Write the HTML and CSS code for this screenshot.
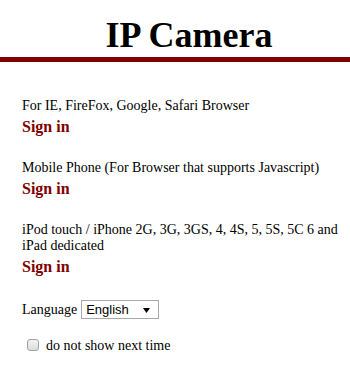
FILE: index.html
```html
<!DOCTYPE html>
<html>
<head>
<meta charset="utf-8">
<title>IP Camera</title>
<link rel="stylesheet" href="styles.css">
</head>
<body>
<header class="top">
  <h1 class="title">IP Camera</h1>
</header>
<main class="content">
  <section class="block">
    <div class="desc">For IE, FireFox, Google, Safari Browser</div>
    <a class="signin" href="#">Sign in</a>
  </section>
  <section class="block">
    <div class="desc">Mobile Phone (For Browser that supports Javascript)</div>
    <a class="signin" href="#">Sign in</a>
  </section>
  <section class="block">
    <div class="desc">iPod touch / iPhone 2G, 3G, 3GS, 4, 4S, 5, 5S, 5C 6 and iPad dedicated</div>
    <a class="signin" href="#">Sign in</a>
  </section>
  <div class="lang">
    <span class="lang-label">Language</span>
    <select class="lang-select">
      <option>English</option>
    </select>
  </div>
  <label class="remember">
    <input type="checkbox" class="check">
    <span>do not show next time</span>
  </label>
</main>
</body>
</html>
```

FILE: styles.css
```css
html, body {
  margin: 0;
  padding: 0;
  background: #ffffff;
}

body {
  font-family: "Liberation Serif", "Times New Roman", serif;
  font-size: 14px;
  color: #000000;
}

.top {
  padding: 15px 0 2px 28px;
  border-bottom: 5px solid #800000;
}

.title {
  margin: 0;
  font-size: 36px;
  line-height: 40px;
  font-weight: bold;
  text-align: center;
}

.content {
  padding: 36px 8px 0 22px;
}

.block {
  margin-bottom: 24px;
}

.desc {
  line-height: 16px;
}

.signin {
  display: block;
  margin-top: 3px;
  font-size: 16px;
  line-height: 19px;
  font-weight: bold;
  color: #800000;
  text-decoration: none;
}

.lang {
  display: flex;
  align-items: center;
  line-height: 16px;
}

.lang-label {
  margin-right: 4px;
}

.lang-select {
  -webkit-appearance: none;
  appearance: none;
  width: 78px;
  height: 19px;
  margin: 0;
  padding: 0 0 0 4px;
  border: 1px solid #a9a9a9;
  border-radius: 0;
  background-color: #ffffff;
  background-image: url("data:image/svg+xml,%3Csvg xmlns='http://www.w3.org/2000/svg' width='7' height='5'%3E%3Cpolygon points='0,0 7,0 3.5,5' fill='%23000'/%3E%3C/svg%3E");
  background-repeat: no-repeat;
  background-position: 61px 7px;
  font-family: "Liberation Sans", Arial, sans-serif;
  font-size: 13px;
  color: #000000;
}

.remember {
  display: flex;
  align-items: flex-start;
  margin-top: 19px;
  line-height: 16px;
}

.check {
  -webkit-appearance: none;
  appearance: none;
  width: 12px;
  height: 12px;
  margin: 1px 7px 0 5px;
  border: 1px solid #a3a3a3;
  border-radius: 3px;
  background: linear-gradient(#f2f2f2, #dcdcdc);
  box-sizing: border-box;
}
```
